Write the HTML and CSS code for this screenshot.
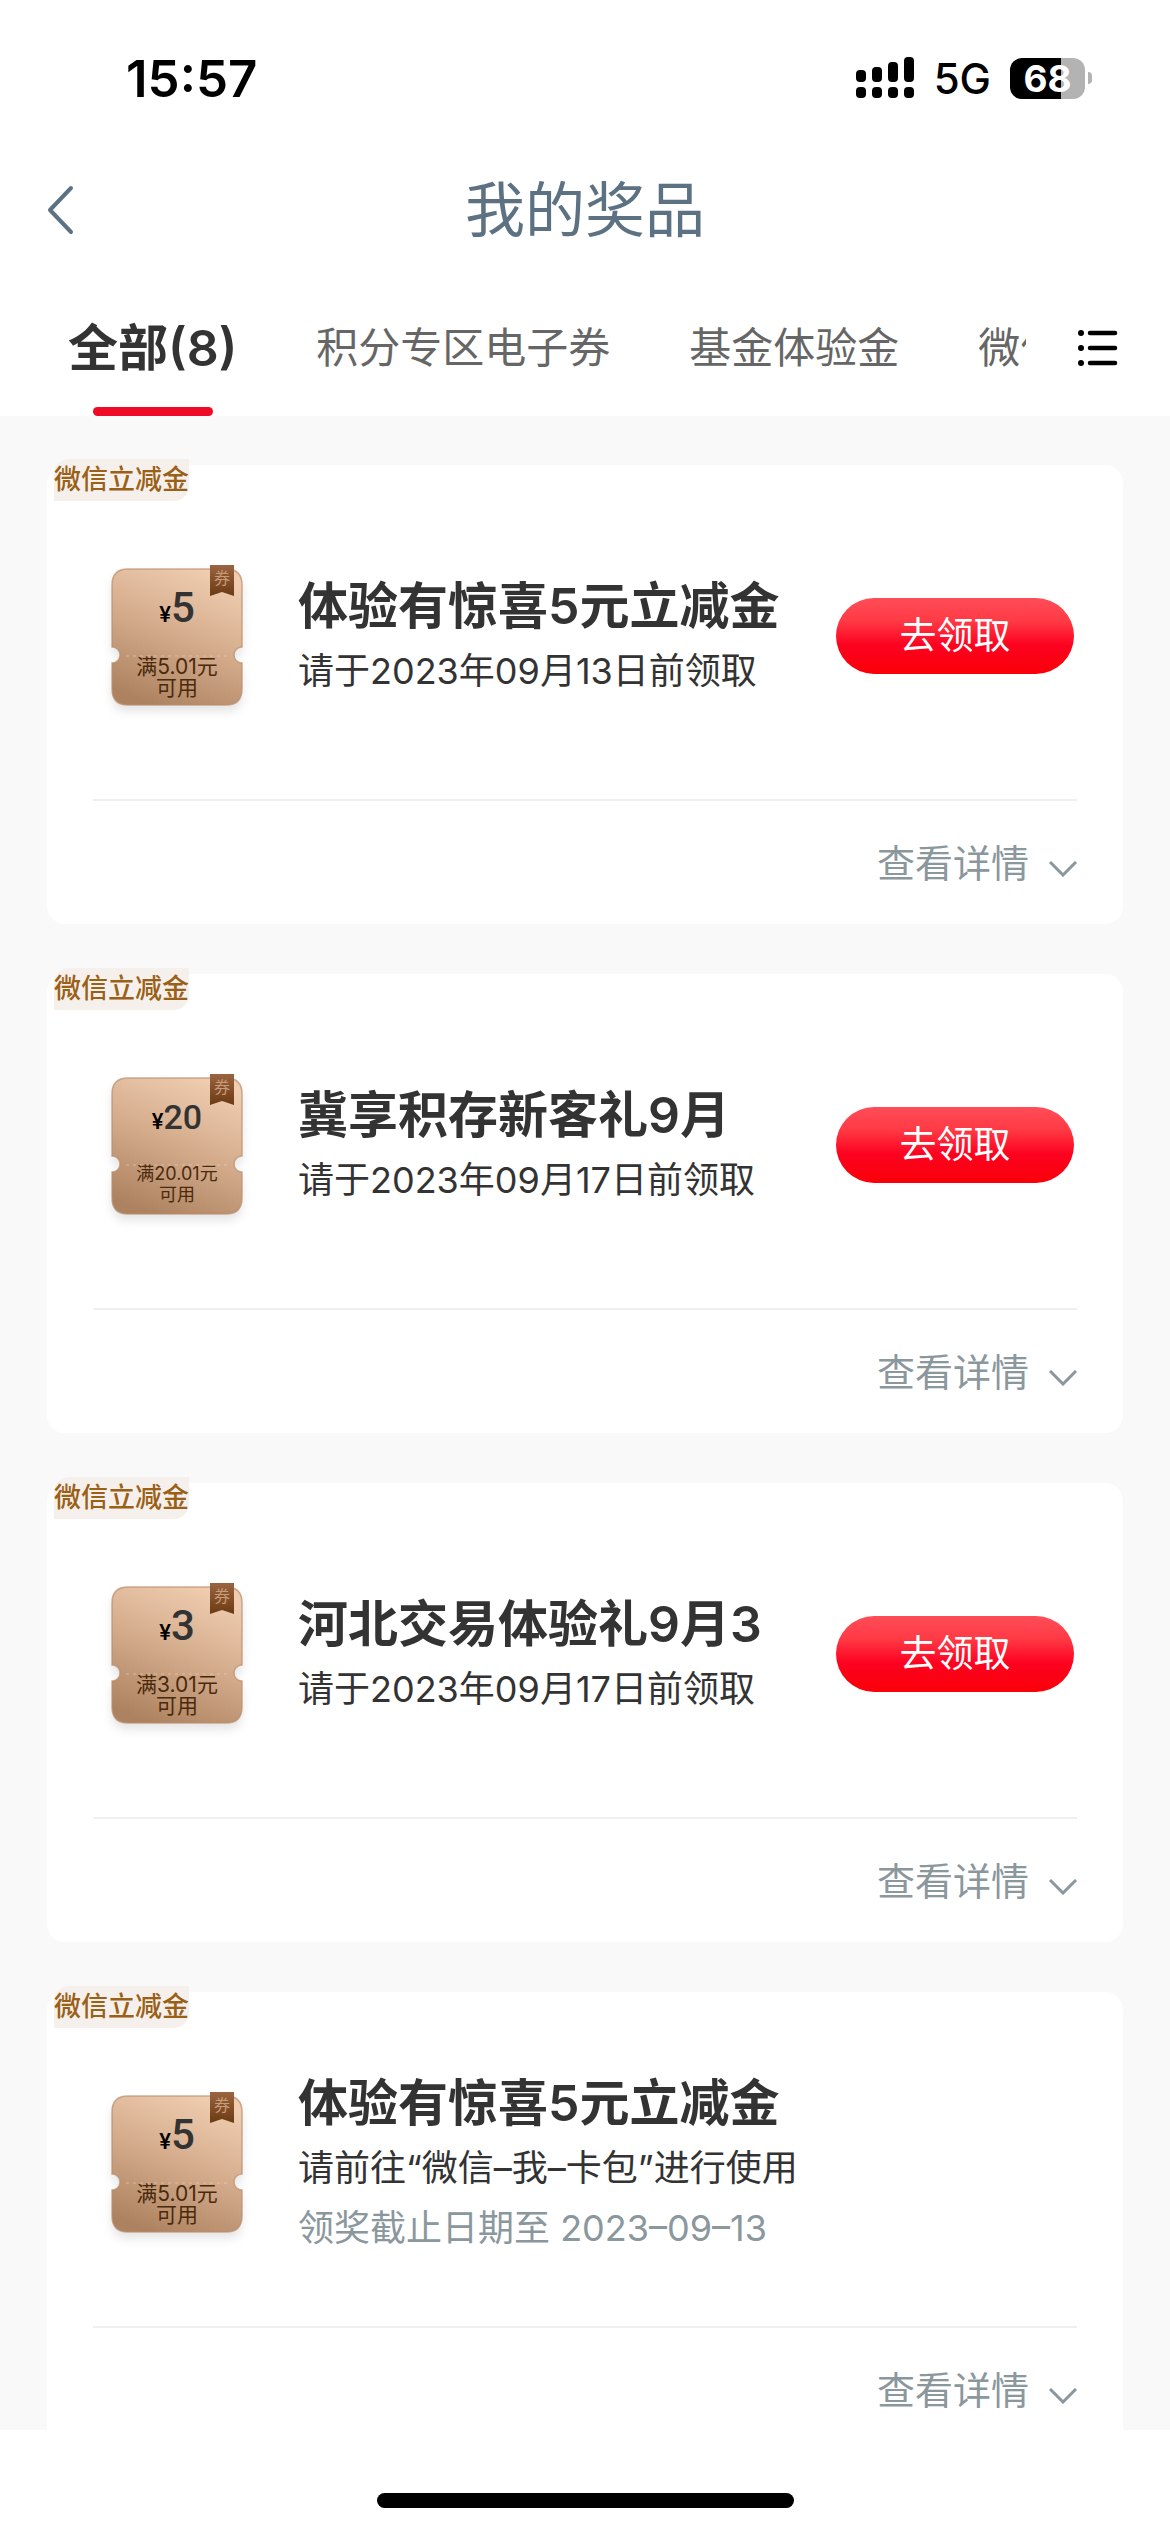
FILE: index.html
```html
<!DOCTYPE html>
<html lang="zh-CN">
<head>
<meta charset="utf-8">
<meta name="viewport" content="width=device-width, initial-scale=1">
<title>我的奖品</title>
<link rel="stylesheet" href="styles.css">
</head>
<body>
<svg class="defs" aria-hidden="true">
  <defs>
    <linearGradient id="ticket-fill" x1="0.7" y1="0" x2="0.3" y2="1">
      <stop offset="0" stop-color="#f0cdb0"/>
      <stop offset="0.5" stop-color="#d3ab8b"/>
      <stop offset="1" stop-color="#ad8260"/>
    </linearGradient>
    <linearGradient id="ribbon-fill" x1="0" y1="0" x2="0" y2="1">
      <stop offset="0" stop-color="#9a6440"/>
      <stop offset="1" stop-color="#6b3a12"/>
    </linearGradient>
    <symbol id="ticket" viewBox="0 0 132 142">
      <path d="M17 4H115Q131 4 131 20V82A8 8 0 0 0 131 98V124Q131 140 115 140H17Q1 140 1 124V98A8 8 0 0 0 1 82V20Q1 4 17 4Z" fill="url(#ticket-fill)" stroke="#b98d6b" stroke-opacity=".7" stroke-width="1.5"/>
      <path d="M15 91H118" stroke="#e8c8ae" stroke-opacity=".35" stroke-width="2" stroke-dasharray="3 4"/>
      <path d="M99 0H123V31L111 27L99 31Z" fill="url(#ribbon-fill)"/>
    </symbol>
    <symbol id="chevron" viewBox="0 0 28 16">
      <path d="M1 1L14 14L27 1" fill="none" stroke="#8a979d" stroke-width="3"/>
    </symbol>
  </defs>
</svg>

<header class="header">
  <div class="status">
    <span class="time">15:57</span>
    <div class="status-right">
      <svg class="signal" viewBox="0 0 59 42" aria-hidden="true">
        <rect x="0" y="13" width="10" height="12" rx="4"/>
        <rect x="16" y="10" width="10" height="15" rx="4"/>
        <rect x="32" y="5" width="10" height="20" rx="4"/>
        <rect x="48" y="0" width="10" height="25" rx="4"/>
        <rect x="0" y="30" width="10" height="11" rx="4"/>
        <rect x="16" y="30" width="10" height="11" rx="4"/>
        <rect x="32" y="30" width="10" height="11" rx="4"/>
        <rect x="48" y="30" width="10" height="11" rx="4"/>
      </svg>
      <span class="network">5G</span>
      <div class="battery"><span class="battery-level">68</span></div>
    </div>
  </div>
  <div class="nav">
    <button class="back" type="button" aria-label="返回">
      <svg viewBox="0 0 28 50" aria-hidden="true"><path d="M25 3L4 25L25 47" fill="none" stroke="#5c7283" stroke-width="4" stroke-linecap="round" stroke-linejoin="round"/></svg>
    </button>
    <h1 class="title">我的奖品</h1>
  </div>
  <div class="tabs">
    <nav class="tab-list">
      <a class="tab tab-active" href="#all">全部(8)</a>
      <a class="tab" href="#points">积分专区电子券</a>
      <a class="tab" href="#fund">基金体验金</a>
      <a class="tab" href="#wechat">微信立减金</a>
    </nav>
    <button class="menu" type="button" aria-label="全部分类">
      <svg viewBox="0 0 40 38" aria-hidden="true">
        <path d="M12 4H37M12 19H37M12 34H37" stroke="#000" stroke-width="4.500" stroke-linecap="round"/>
        <g fill="#000"><circle cx="3" cy="4" r="3"/><circle cx="3" cy="19" r="3"/><circle cx="3" cy="34" r="3"/></g>
      </svg>
    </button>
  </div>
</header>

<main class="list" id="all">
  <article class="card">
    <span class="tag">微信立减金</span>
    <div class="card-main">
      <div class="ticket">
        <svg class="ticket-bg" aria-hidden="true"><use href="#ticket"/></svg>
        <span class="ribbon">券</span>
        <p class="amount"><span class="yen">¥</span>5</p>
        <p class="rule">满5.01元<br>可用</p>
      </div>
      <div class="info">
        <h2 class="name">体验有惊喜5元立减金</h2>
        <p class="desc">请于2023年09月13日前领取</p>
      </div>
      <button class="claim" type="button">去领取</button>
    </div>
    <div class="card-foot">
      <button class="detail" type="button">查看详情<svg class="chevron" aria-hidden="true"><use href="#chevron"/></svg></button>
    </div>
  </article>

  <article class="card">
    <span class="tag">微信立减金</span>
    <div class="card-main">
      <div class="ticket ticket-long">
        <svg class="ticket-bg" aria-hidden="true"><use href="#ticket"/></svg>
        <span class="ribbon">券</span>
        <p class="amount"><span class="yen">¥</span>20</p>
        <p class="rule">满20.01元<br>可用</p>
      </div>
      <div class="info">
        <h2 class="name">冀享积存新客礼9月</h2>
        <p class="desc">请于2023年09月17日前领取</p>
      </div>
      <button class="claim" type="button">去领取</button>
    </div>
    <div class="card-foot">
      <button class="detail" type="button">查看详情<svg class="chevron" aria-hidden="true"><use href="#chevron"/></svg></button>
    </div>
  </article>

  <article class="card">
    <span class="tag">微信立减金</span>
    <div class="card-main">
      <div class="ticket">
        <svg class="ticket-bg" aria-hidden="true"><use href="#ticket"/></svg>
        <span class="ribbon">券</span>
        <p class="amount"><span class="yen">¥</span>3</p>
        <p class="rule">满3.01元<br>可用</p>
      </div>
      <div class="info">
        <h2 class="name">河北交易体验礼9月3</h2>
        <p class="desc">请于2023年09月17日前领取</p>
      </div>
      <button class="claim" type="button">去领取</button>
    </div>
    <div class="card-foot">
      <button class="detail" type="button">查看详情<svg class="chevron" aria-hidden="true"><use href="#chevron"/></svg></button>
    </div>
  </article>

  <article class="card">
    <span class="tag">微信立减金</span>
    <div class="card-main">
      <div class="ticket">
        <svg class="ticket-bg" aria-hidden="true"><use href="#ticket"/></svg>
        <span class="ribbon">券</span>
        <p class="amount"><span class="yen">¥</span>5</p>
        <p class="rule">满5.01元<br>可用</p>
      </div>
      <div class="info">
        <h2 class="name">体验有惊喜5元立减金</h2>
        <p class="desc">请前往“微信–我–卡包”进行使用</p>
        <p class="desc deadline">领奖截止日期至 2023–09–13</p>
      </div>
    </div>
    <div class="card-foot">
      <button class="detail" type="button">查看详情<svg class="chevron" aria-hidden="true"><use href="#chevron"/></svg></button>
    </div>
  </article>
</main>

<footer class="home"><div class="home-bar"></div></footer>
</body>
</html>
```
FILE: styles.css
```css
* {
  box-sizing: border-box;
}

body {
  margin: 0;
  height: 100vh;
  display: flex;
  flex-direction: column;
  background: #fff;
  color: #333;
  font-family: Inter, "Noto Sans CJK SC", sans-serif;
}

h1,
h2,
p {
  margin: 0;
  font-weight: 400;
}

button {
  padding: 0;
  border: 0;
  background: none;
  font-family: inherit;
}

svg {
  display: block;
}

.defs {
  position: absolute;
  width: 0;
  height: 0;
}

/* Status bar */
.header {
  flex: none;
}

.status {
  height: 140px;
  padding: 16px 78px 0 126px;
  display: flex;
  align-items: center;
  justify-content: space-between;
  color: #000;
}

.time {
  font-size: 51px;
  font-weight: 600;
}

.status-right {
  display: flex;
  align-items: center;
  gap: 19px;
}

.signal {
  width: 59px;
  height: 42px;
}

.network {
  font-size: 42px;
  font-weight: 500;
}

.battery {
  display: flex;
  align-items: center;
  gap: 3px;
}

.battery::after {
  content: "";
  width: 4px;
  height: 12px;
  border-radius: 0 6px 6px 0;
  background: #b3b3b3;
}

.battery-level {
  width: 75px;
  height: 41px;
  border-radius: 12px;
  background: linear-gradient(90deg, #000 68%, #b3b3b3 68%);
  color: #fff;
  font-size: 37px;
  font-weight: 700;
  line-height: 41px;
  text-align: center;
}

/* Title row */
.nav {
  height: 140px;
  padding: 0 46px;
  display: grid;
  grid-template-columns: 1fr auto 1fr;
  align-items: center;
}

.back {
  justify-self: start;
}

.back svg {
  width: 28px;
  height: 50px;
}

.title {
  color: #5c7283;
  font-size: 60px;
  line-height: 80px;
}

/* Tabs */
.tabs {
  height: 136px;
  padding-right: 52px;
  display: flex;
  align-items: center;
  justify-content: space-between;
}

.tab-list {
  flex: 0 1 auto;
  min-width: 0;
  height: 136px;
  margin-right: 52px;
  padding-left: 68px;
  display: flex;
  gap: 79px;
  overflow: hidden;
}

.tab {
  position: relative;
  flex: none;
  color: #666;
  font-size: 42px;
  line-height: 136px;
  text-decoration: none;
  white-space: nowrap;
}

.tab-active {
  color: #333;
  font-size: 50px;
  font-weight: 600;
}

.tab-active::after {
  content: "";
  position: absolute;
  left: 50%;
  bottom: 0;
  width: 120px;
  height: 9px;
  margin-left: -60px;
  border-radius: 5px;
  background: #ef0a28;
}

.menu svg {
  width: 40px;
  height: 38px;
}

/* Prize list */
.list {
  flex: 1;
  min-height: 0;
  padding: 49px 47px;
  display: flex;
  flex-direction: column;
  gap: 50px;
  overflow: hidden;
  background: #f9f9f9;
}

.card {
  position: relative;
  flex: none;
  border-radius: 18px;
  background: #fff;
}

.tag {
  position: absolute;
  top: -6px;
  left: 7px;
  border-radius: 15px 0;
  background: #f6f0ed;
  color: #9a6016;
  font-size: 27px;
  font-weight: 500;
  line-height: 42px;
}

.card-main {
  height: 334px;
  padding: 8px 49px 0 64px;
  display: flex;
  align-items: center;
}

.ticket {
  position: relative;
  flex: none;
  width: 132px;
  height: 142px;
  padding-top: 19px;
  color: #4a2a0c;
  text-align: center;
}

.ticket-bg {
  position: absolute;
  inset: 0;
  width: 132px;
  height: 142px;
  filter: drop-shadow(0 6px 5px rgba(0, 0, 0, 0.1));
}

.ribbon {
  position: absolute;
  top: 3px;
  left: 99px;
  width: 24px;
  color: #c79a78;
  font-size: 16px;
  line-height: 20px;
}

.amount {
  position: relative;
  color: #333;
  font-family: Roboto, sans-serif;
  font-size: 42px;
  font-weight: 500;
  line-height: 48px;
}

.yen {
  color: #000;
  font-size: 22px;
}

.rule {
  position: relative;
  margin-top: 17px;
  font-size: 21px;
  line-height: 21px;
}

.ticket-long .amount {
  font-size: 34px;
}

.ticket-long .rule {
  font-size: 18px;
}

.info {
  flex: 1;
  min-width: 0;
  padding-left: 55px;
  white-space: nowrap;
}

.name {
  font-size: 50px;
  font-weight: 600;
  line-height: 70px;
}

.desc {
  font-size: 36px;
  line-height: 60px;
}

.deadline {
  color: #8a979d;
}

.claim {
  flex: none;
  width: 238px;
  height: 76px;
  border-radius: 38px;
  background: linear-gradient(#ff4d58, #ff3a45 30%, #fc0220 62%, #fa0008);
  color: #fff;
  font-size: 37px;
  line-height: 76px;
}

.card-foot {
  height: 125px;
  margin: 0 46px;
  display: flex;
  align-items: center;
  justify-content: flex-end;
  border-top: 2px solid #efefef;
}

.detail {
  display: flex;
  align-items: center;
  gap: 20px;
  color: #8a979d;
  font-size: 38px;
  line-height: 60px;
}

.chevron {
  width: 28px;
  height: 16px;
  margin-top: 12px;
}

/* Home indicator */
.home {
  flex: none;
  height: 102px;
  padding-bottom: 24px;
  display: flex;
  align-items: flex-end;
  justify-content: center;
}

.home-bar {
  width: 417px;
  height: 15px;
  border-radius: 8px;
  background: #000;
}
```
